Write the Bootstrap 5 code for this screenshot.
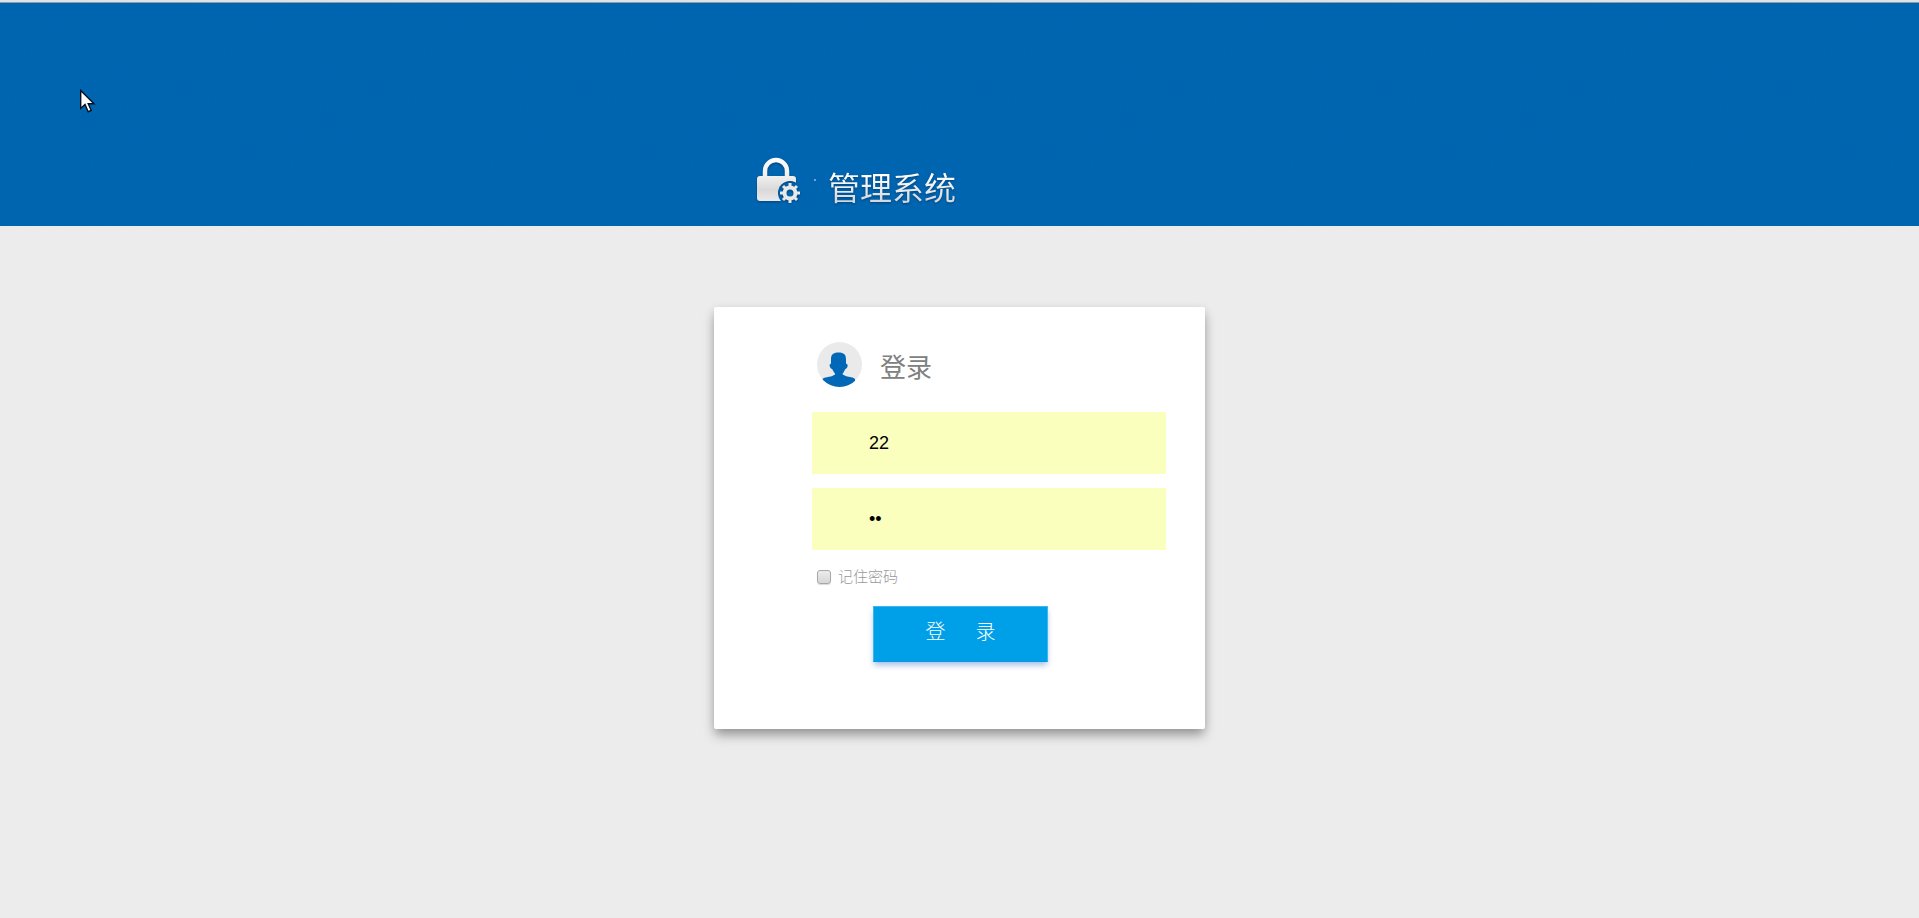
<!DOCTYPE html>
<html lang="zh-CN">
<head>
<meta charset="utf-8">
<meta name="viewport" content="width=device-width, initial-scale=1">
<title>管理系统</title>
<link href="https://cdn.jsdelivr.net/npm/bootstrap@5.3.0/dist/css/bootstrap.min.css" rel="stylesheet">
<style>
  body {
    background: #ececec;
    font-family: "Liberation Sans", "Noto Sans CJK SC", sans-serif;
  }
  .site-head {
    position: relative;
    padding-top: 145px;
    padding-bottom: 14px;
    background-color: #0064b1;
    background-image: url("data:image/svg+xml,%3Csvg xmlns='http://www.w3.org/2000/svg' width='200' height='200'%3E%3Cfilter id='n' x='0' y='0' width='1' height='1'%3E%3CfeTurbulence type='fractalNoise' baseFrequency='0.35' numOctaves='3' stitchTiles='stitch'/%3E%3CfeColorMatrix values='0 0 0 0 0 0 0 0 0 0.15 0 0 0 0 0.35 0.8 0 0 0 -0.3'/%3E%3C/filter%3E%3Crect width='200' height='200' filter='url(%23n)' opacity='0.7'/%3E%3C/svg%3E");
    border-top: 3px solid #dfe3e8;
  }
  .site-head::before {
    content: "";
    position: absolute;
    inset: -1px 0 auto 0;
    height: 1px;
    background: #8f9ba6;
  }
  .login-width { max-width: 491px; }
  .brand { padding-left: 42px; gap: 12px; }
  .brand-dot { width: 2px; height: 2px; background: #6da6d6; }
  .brand-title {
    margin-top: 18px;
    font-size: 32px;
    line-height: 46px;
    font-weight: 400;
    background: linear-gradient(#fff 20%, #cfd3d6 85%);
    -webkit-background-clip: text;
    background-clip: text;
    color: transparent;
    filter: drop-shadow(0 1px 1px rgba(0, 30, 70, .5));
  }
  .login-card {
    margin-top: 81px;
    padding: 31px 39px 67px 98px;
    border: 0;
    border-radius: 2px;
    box-shadow: 0 7px 12px -1px rgba(0, 0, 0, .34), 0 2px 10px rgba(0, 0, 0, .08);
  }
  .login-head { padding-left: 5px; gap: 18px; margin-bottom: 21px; }
  .login-title { margin-top: 8px; font-size: 26px; line-height: 45px; font-weight: 400; color: #808080; }
  .login-field {
    height: 62px;
    padding: 0 57px;
    border: 0;
    border-radius: 0;
    font-size: 18px;
    color: #000;
    background: #faffbd;
  }
  .login-field:focus { background: #faffbd; }
  .login-field + .login-field { margin-top: 14px; }
  .remember { padding-left: 5px; gap: 7px; margin: 15px 0 17px; }
  .remember-box {
    appearance: none;
    width: 14px;
    height: 14px;
    margin: 0;
    border: 1px solid #a8a8a8;
    border-radius: 3px;
    background: linear-gradient(#ececec, #d6d6d6);
    box-shadow: 0 1px 1px rgba(0, 0, 0, .15);
  }
  .remember-box:checked { background: #888; }
  .remember-text { font-size: 15px; line-height: 24px; font-weight: 300; color: #999; }
  .login-btn {
    width: 175px;
    height: 56px;
    margin-left: 61px;
    padding: 0 0 4px;
    border: 1px solid #3fb5f0;
    border-bottom-color: #0a96de;
    border-radius: 0;
    background: #00a0e9;
    color: #fff;
    font-size: 20px;
    font-weight: 300;
    box-shadow: 0 4px 6px -1px rgba(20, 90, 190, .4);
  }
  .login-btn:hover { background: #0095da; color: #fff; }
  .pointer { position: absolute; left: 80px; top: 86px; }
</style>
</head>
<body class="min-vh-100">
<header class="site-head">
  <svg class="pointer" width="16" height="25" viewBox="0 0 16 25" aria-hidden="true">
    <path d="M.7 1.500v18l4.300-4 3.200 7.200 3-1.400-3-6.600h5.800z" fill="#fff" stroke="#001020" stroke-width="1.400"/>
  </svg>
  <div class="login-width mx-auto">
    <div class="brand d-flex align-items-center">
      <svg width="46" height="48" viewBox="0 0 46 48" aria-hidden="true">
        <defs>
          <linearGradient id="metal" x1="0" y1="0" x2="0" y2="48" gradientUnits="userSpaceOnUse">
            <stop offset="0" stop-color="#fff"/><stop offset=".45" stop-color="#eee"/>
            <stop offset=".7" stop-color="#d9d9d9"/><stop offset="1" stop-color="#eee"/>
          </linearGradient>
          <mask id="cut"><path fill="#fff" d="M0 0h46v48H0z"/><circle cx="34" cy="37" r="12" fill="#000"/></mask>
        </defs>
        <g style="filter:drop-shadow(0 1px 1px rgba(0,30,70,.5))">
          <g mask="url(#cut)">
            <path d="M9 20V15a11 11 0 0 1 22 0v6" fill="none" stroke="url(#metal)" stroke-width="4.500"/>
            <rect x="1" y="20" width="39" height="25" rx="3" fill="url(#metal)"/>
          </g>
          <circle cx="34" cy="37" r="5.500" fill="none" stroke="#e8e8e8" stroke-width="4"/>
          <g stroke="#e8e8e8" stroke-width="3">
            <path d="M34 27v4M34 43v4M24 37h4M40 37h4M27 30l3 3M38 41l3 3M27 44l3-3M38 33l3-3"/>
          </g>
        </g>
      </svg>
      <span class="brand-dot"></span>
      <h1 class="brand-title mb-0">管理系统</h1>
    </div>
  </div>
</header>

<main class="login-width mx-auto pb-5">
  <form class="card login-card" onsubmit="return false">
    <div class="login-head d-flex align-items-center">
      <svg width="45" height="45" viewBox="0 0 45 45" aria-hidden="true">
        <clipPath id="disc"><circle cx="22.500" cy="22.500" r="22.500"/></clipPath>
        <g clip-path="url(#disc)">
          <path d="M0 0h45v45H0z" fill="#eaeaea"/>
          <path d="M14 17.500C14 12.500 16 10.500 21.500 10.500S29 12.500 29 17.500V21.500Q31 22 30.700 24T28 27.500Q27 30 25.700 31.500V32.500Q29 34.500 33 35T38 37V45H5V37Q7 35.500 11 35T18 32.500V31.500Q16.500 30 15.500 27.500 13 26 12.600 24T14 21.500Z" fill="#0068b7"/>
        </g>
      </svg>
      <h2 class="login-title mb-0">登录</h2>
    </div>
    <input class="form-control login-field" type="text" value="22" aria-label="用户名">
    <input class="form-control login-field" type="password" value="22" aria-label="密码">
    <div class="remember d-flex align-items-center">
      <input class="remember-box" type="checkbox" id="remember">
      <label class="remember-text" for="remember">记住密码</label>
    </div>
    <button class="btn login-btn" type="submit">登&emsp;&ensp;录</button>
  </form>
</main>
<script src="https://cdn.jsdelivr.net/npm/bootstrap@5.3.0/dist/js/bootstrap.bundle.min.js"></script>
</body>
</html>
